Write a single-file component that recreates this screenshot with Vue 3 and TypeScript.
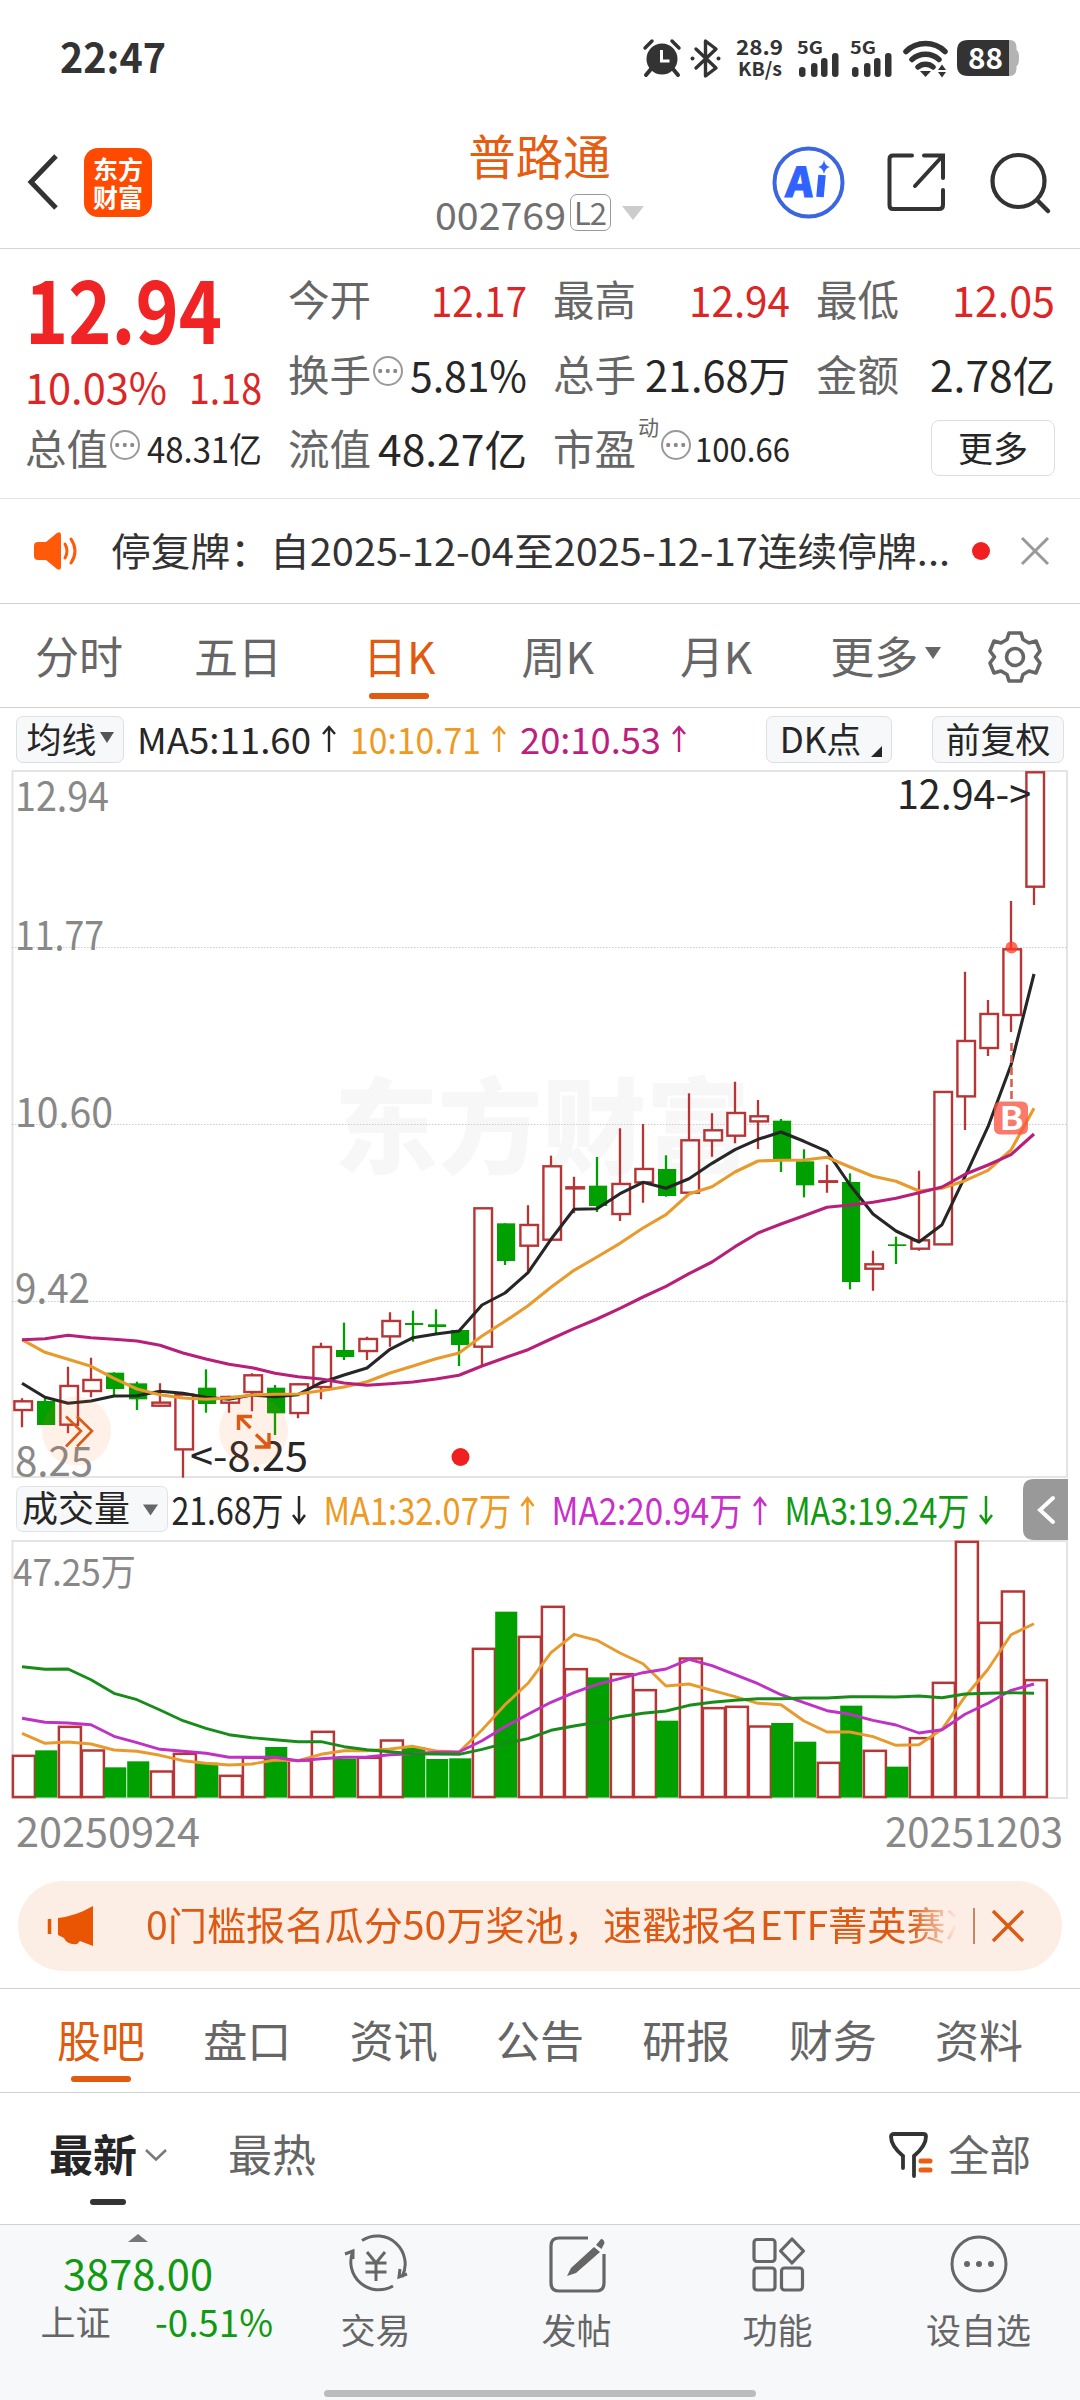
<script setup lang="ts">
import { h } from 'vue'

interface FitProps { t: string; w: number; s: number; c?: string; b?: number; squeeze?: boolean }

// One line of text set to an exact advance width.
const Fit = (p: FitProps) =>
  h('svg', { width: p.w, height: p.s, style: { overflow: 'visible', display: 'block', flex: 'none' } }, [
    h('text', {
      x: 0,
      y: (p.s * 0.936).toFixed(2),
      'font-size': p.s,
      fill: p.c ?? '#262626',
      'font-weight': p.b ?? 400,
      textLength: p.w,
      lengthAdjust: p.squeeze ? 'spacingAndGlyphs' : 'spacing',
    }, p.t),
  ])
Fit.props = { t: String, w: Number, s: Number, c: String, b: Number, squeeze: Boolean }

const RED = '#dc2626'
const UP = '#b83535'
const DOWN = '#00a000'

const STEP = 23
const cx = (i: number) => 22 + STEP * i

// kind, high, body top, body bottom, low
type Candle = ['r' | 'g', number, number, number, number]
const raw: Candle[] = [
  ['r', 835, 843, 871, 922], ['g', 835, 843, 915, 915], ['r', 740, 797, 915, 940], ['r', 713, 779, 814, 832],
  ['g', 757, 758, 807, 825], ['g', 785, 790, 838, 870], ['r', 790, 847, 858, 860], ['r', 823, 823, 989, 1073],
  ['g', 748, 803, 852, 878], ['r', 827, 830, 849, 878], ['r', 760, 765, 817, 874], ['g', 795, 803, 880, 945],
  ['r', 790, 792, 880, 895], ['r', 668, 680, 802, 838], ['g', 608, 690, 711, 720], ['r', 650, 656, 694, 720],
  ['r', 577, 602, 650, 680], ['g', 572, 609, 615, 665], ['g', 568, 613, 621, 640], ['g', 630, 630, 675, 738],
  ['r', 263, 264, 681, 738], ['g', 310, 310, 423, 435], ['r', 256, 314, 378, 455], ['r', 107, 138, 360, 360],
  ['r', 170, 201, 206, 280], ['g', 111, 197, 258, 276], ['r', 25, 191, 283, 303], ['r', 12, 146, 188, 248],
  ['g', 106, 147, 228, 230], ['r', -80, 60, 219, 219], ['r', -20, 30, 62, 110], ['r', -115, -22, 48, 70],
  ['r', -60, -12, 5, 87], ['g', -3, 2, 120, 156], ['g', 88, 124, 196, 232], ['r', 134, 183, 184, 218],
  ['g', 160, 186, 486, 508], ['r', 392, 432, 447, 512], ['g', 350, 373, 378, 432], ['r', 152, 360, 387, 392],
  ['r', -85, -85, 374, 374], ['r', -445, -238, -70, 30], ['r', -360, -319, -215, -192], ['r', -657, -513, -314, -264],
  ['r', -1044, -1044, -699, -645],
]
const toY = (d: number) => 1120 + d / 3
const candles = raw.map(([kind, hi, top, bot, lo], i) => ({
  x: cx(i), up: kind === 'r', hi: toY(hi), top: toY(top), bot: toY(bot), lo: toY(lo),
}))

const points = (base: number, v: number[]) => v.map((d, i) => `${cx(i)},${(base + d / 3).toFixed(1)}`).join(' ')

const ma5 = points(1120, [790, 832, 850, 843, 828, 827, 814, 820, 832, 838, 825, 830, 824, 788, 765, 744, 688, 653, 642, 633, 555, 519, 458, 358, 268, 266, 221, 187, 205, 176, 130, 89, 58, 36, 64, 94, 195, 282, 333, 366, 314, 170, 20, -165, -438])
const ma10 = points(1120, [659, 697, 718, 739, 775, 807, 824, 834, 838, 834, 825, 823, 822, 812, 801, 785, 759, 738, 716, 699, 648, 604, 557, 502, 451, 411, 370, 324, 284, 222, 200, 156, 123, 121, 120, 112, 141, 169, 184, 213, 205, 182, 151, 90, -35])
const ma20 = points(1120, [659, 656, 646, 653, 658, 663, 676, 699, 717, 733, 743, 760, 770, 777, 789, 796, 791, 786, 777, 766, 738, 713, 689, 657, 626, 597, 565, 531, 499, 461, 426, 380, 339, 312, 287, 262, 255, 247, 235, 218, 201, 163, 135, 104, 42])

const volTops = [856, 841, 769, 840, 892, 874, 903, 850, 878, 916, 862, 831, 870, 784, 866, 862, 810, 832, 867, 865, 535, 425, 499, 409, 596, 622, 611, 659, 752, 564, 713, 709, 768, 759, 815, 877, 707, 841, 890, 803, 637, 214, 457, 363, 629]
const volumes = volTops.map((d, i) => ({ x: 12 + STEP * i, y: 1470 + d / 3, up: raw[i][0] === 'r' }))
const vma1 = points(1470, [790, 820, 816, 822, 840, 844, 856, 872, 880, 885, 882, 870, 872, 853, 842, 842, 837, 829, 843, 846, 780, 704, 640, 548, 493, 511, 549, 581, 648, 642, 661, 680, 700, 704, 753, 786, 786, 800, 826, 824, 778, 680, 598, 494, 461])
const vma2 = points(1470, [745, 757, 759, 764, 799, 818, 838, 844, 850, 862, 862, 862, 872, 866, 862, 861, 854, 851, 847, 846, 812, 770, 733, 697, 668, 643, 626, 608, 597, 568, 587, 614, 641, 674, 698, 722, 733, 751, 765, 789, 779, 733, 700, 661, 642])
const vma3 = points(1470, [590, 598, 597, 629, 670, 689, 720, 752, 775, 794, 803, 809, 815, 815, 830, 839, 845, 851, 852, 853, 838, 820, 806, 781, 768, 757, 740, 730, 723, 706, 697, 691, 686, 686, 684, 684, 680, 680, 681, 678, 683, 672, 670, 668, 670])

const gridLines = [947.5, 1124.5, 1301.5]
const axis = [
  { t: '12.94', y: 811, w: 94 }, { t: '11.77', y: 950, w: 89 }, { t: '10.60', y: 1127, w: 98 },
  { t: '9.42', y: 1303, w: 75 }, { t: '8.25', y: 1476, w: 78 },
]
const sections = ['股吧', '盘口', '资讯', '公告', '研报', '财务', '资料']
const signalBars = [[2, 67], [14, 63], [24, 58], [35, 53]]
</script>

<template>
  <div class="screen">
    <header class="status">
      <Fit class="time" t="22:47" :w="106" :s="41" c="#333" :b="600" squeeze />
      <svg class="status-icons" width="380" height="44" viewBox="640 36 380 44">
        <g fill="#333">
          <circle cx="662" cy="59" r="15.5" />
          <path d="M651 69l-5 6M673 69l5 6" stroke="#333" stroke-width="4" stroke-linecap="round" />
          <path d="M645 48l7-7M679 48l-7-7" stroke="#333" stroke-width="3.5" stroke-linecap="round" />
          <path d="M661.500 50v11h8" fill="none" stroke="#fff" stroke-width="3" />
        </g>
        <path d="M696 49l20 19-10.500 8V41L716 49l-20 19" fill="none" stroke="#333" stroke-width="3.400" stroke-linejoin="round" stroke-linecap="round" />
        <circle cx="692.500" cy="58.500" r="2" fill="#333" /><circle cx="718.500" cy="58.500" r="2" fill="#333" />
        <text x="736" y="55" font-size="21" font-weight="600" fill="#333" textLength="47" lengthAdjust="spacingAndGlyphs">28.9</text>
        <text x="738" y="76" font-size="19" font-weight="600" fill="#333" textLength="44" lengthAdjust="spacingAndGlyphs">KB/s</text>
        <g v-for="o in [797, 850]" :key="o">
          <text :x="o" y="54" font-size="17" font-weight="700" fill="#333" textLength="26" lengthAdjust="spacingAndGlyphs">5G</text>
          <rect v-for="b in signalBars" :key="b[0]" :x="o + b[0]" :y="b[1]" width="6.500" :height="77 - b[1]" rx="3" fill="#333" />
        </g>
        <g fill="none" stroke="#333" stroke-width="5.500" stroke-linecap="round">
          <path d="M906 51.500a28 28 0 0 1 39 0" />
          <path d="M912 59.500a20 20 0 0 1 27 0" />
          <path d="M918 67a11.500 11.500 0 0 1 15 0" />
        </g>
        <path d="M920 71h11l-5.500 6z" fill="#333" />
        <path d="M938 70l4-5.500 4 5.500zM938 72l4 5.500 4-5.500z" fill="#333" />
        <path d="M1006 40h4q6 0 6.500 7v3q2.500 1 2.500 8t-2.500 8v3q-.5 7-6.500 7h-4z" fill="#b3b3b3" />
        <path d="M968 40h41v36h-41q-11 0-11-11V51q0-11 11-11z" fill="#333" />
        <text x="968" y="69" font-size="29" font-weight="700" fill="#fff" textLength="35" lengthAdjust="spacingAndGlyphs">88</text>
      </svg>
    </header>

    <nav class="topbar">
      <div class="side">
        <svg width="32" height="58" viewBox="0 0 32 58"><path d="M29 3L4 29l25 26" fill="none" stroke="#333" stroke-width="5" /></svg>
        <div class="logo"><span>东方</span><span>财富</span></div>
      </div>
      <div class="title">
        <b>普路通</b>
        <div class="code">
          <Fit t="002769" :w="131" :s="38" c="#707070" squeeze />
          <span class="l2"><Fit t="L2" :w="33" :s="31" c="#707070" /></span>
          <i class="tri" />
        </div>
      </div>
      <div class="tools">
        <svg width="73" height="73" viewBox="0 0 73 73">
          <circle cx="36.500" cy="36.500" r="34" fill="none" stroke="#3b66e0" stroke-width="4" />
          <text transform="translate(13 50.500) skewX(-5)" font-size="41" font-weight="900" fill="#2f62ff" stroke="#2f62ff" stroke-width="1" textLength="27" lengthAdjust="spacingAndGlyphs">A</text>
          <path d="M50 29l-2 22" stroke="#2f62ff" stroke-width="7.500" />
          <path d="M52 14q1 6 6 7-5 1-6 7-1-6-6-7 5-1 6-7z" fill="#2f62ff" />
        </svg>
        <svg width="60" height="60" viewBox="0 0 60 60">
          <path d="M25 3.500H6q-3.500 0-3.500 3.500v46q0 4 3.500 4h46q4 0 4-4V38M37 3.500h19V26M56 3.500L28 34" fill="none" stroke="#333" stroke-width="4" stroke-linecap="round" />
        </svg>
        <svg width="62" height="62" viewBox="0 0 62 62">
          <circle cx="28.500" cy="30" r="26" fill="none" stroke="#333" stroke-width="4.200" />
          <path d="M47 49l11 11" stroke="#333" stroke-width="4.500" stroke-linecap="round" />
        </svg>
      </div>
    </nav>

    <section class="quote">
      <div class="price">
        <Fit t="12.94" :w="197" :s="87" c="#f02424" :b="700" squeeze />
        <div class="delta"><Fit t="10.03%" :w="142" :s="42" :c="RED" squeeze /><Fit t="1.18" :w="73" :s="42" :c="RED" squeeze /></div>
      </div>
      <div class="cell"><span>今开</span><Fit t="12.17" :w="96" :s="42" :c="RED" squeeze /></div>
      <div class="cell"><span>最高</span><Fit t="12.94" :w="101" :s="42" :c="RED" squeeze /></div>
      <div class="cell"><span>最低</span><Fit t="12.05" :w="103" :s="42" :c="RED" squeeze /></div>
      <div class="cell"><span>换手</span><i class="dots" /><Fit t="5.81%" :w="117" :s="42" squeeze /></div>
      <div class="cell"><span>总手</span><Fit t="21.68万" :w="145" :s="42" squeeze /></div>
      <div class="cell"><span>金额</span><Fit t="2.78亿" :w="125" :s="42" squeeze /></div>
      <div class="cell"><span>总值</span><i class="dots" /><Fit t="48.31亿" :w="115" :s="35" squeeze /></div>
      <div class="cell"><span>流值</span><Fit t="48.27亿" :w="149" :s="42" squeeze /></div>
      <div class="cell"><span>市盈</span><sup>动</sup><i class="dots" /><Fit t="100.66" :w="95" :s="33" squeeze /></div>
      <div class="cell end"><div class="more">更多</div></div>
    </section>

    <section class="notice">
      <svg width="48" height="38" viewBox="0 0 48 38">
        <path d="M4 10h8L23 1q4-2 4 2v32q0 4-4 2L12 28H4q-4 0-4-4V14q0-4 4-4z" fill="#ff5a0a" />
        <path d="M31 12q4 7 0 14M37 7q8 12 0 24" fill="none" stroke="#ff5a0a" stroke-width="3" stroke-linecap="round" />
      </svg>
      <Fit t="停复牌：自2025-12-04至2025-12-17连续停牌..." :w="839" :s="38.5" c="#333" squeeze />
      <i class="dot" />
      <svg width="30" height="30" viewBox="0 0 30 30"><path d="M2 2l26 26M28 2L2 28" stroke="#999" stroke-width="3" /></svg>
    </section>

    <nav class="periods">
      <span>分时</span><span>五日</span><span class="on">日K</span><span>周K</span><span>月K</span>
      <span class="drop">更多<i /></span>
      <svg width="52" height="54" viewBox="-26 -27 52 54">
        <path d="M-6-24H6L8-17.500 14-14 21-16 25-6 20.500 0 25 6 21 16 14 14 8 17.500 6 24H-6L-8 17.500-14 14-21 16-25 6-20.500 0-25-6-21-16-14-14-8-17.500z" fill="none" stroke="#666" stroke-width="3.600" stroke-linejoin="round" />
        <circle r="8.500" fill="none" stroke="#666" stroke-width="3.600" />
      </svg>
    </nav>

    <section class="ma-row">
      <div class="chip first">均线<i /></div>
      <Fit class="m5" t="MA5:11.60" :w="174" :s="36" squeeze /><svg class="arrow" width="14" height="28" viewBox="0 0 14 28"><path d="M7 27V2M1 9l6-7 6 7" fill="none" stroke="#262626" stroke-width="2.400" /></svg>
      <Fit t="10:10.71" :w="131" :s="36" c="#ee9a22" squeeze /><svg class="arrow" width="14" height="28" viewBox="0 0 14 28"><path d="M7 27V2M1 9l6-7 6 7" fill="none" stroke="#ee9a22" stroke-width="2.400" /></svg>
      <Fit t="20:10.53" :w="141" :s="36" c="#be1e7d" squeeze /><svg class="arrow" width="14" height="28" viewBox="0 0 14 28"><path d="M7 27V2M1 9l6-7 6 7" fill="none" stroke="#be1e7d" stroke-width="2.400" /></svg>
      <div class="chip dk">DK点<i /></div>
      <div class="chip">前复权</div>
    </section>

    <svg class="chart" width="1080" height="1092" viewBox="0 770 1080 1092">
      <text x="334" y="1166" font-size="104" font-weight="900" fill="#f7f7f7" textLength="416">东方财富</text>
      <g fill="none" stroke="#e4e4e4" stroke-width="2">
        <rect x="12.500" y="771" width="1054.500" height="706" />
        <rect x="12.500" y="1541" width="1054.500" height="257" />
      </g>
      <line v-for="y in gridLines" :key="y" x1="12" x2="1067" :y1="y" :y2="y" stroke="#ccc" stroke-dasharray="1.500 1.500" />
      <text v-for="a in axis" :key="a.t" x="15" :y="a.y" font-size="41" fill="#888" :textLength="a.w" lengthAdjust="spacingAndGlyphs">{{ a.t }}</text>

      <g v-for="(c, i) in candles" :key="i">
        <template v-if="c.up">
          <path :d="`M${c.x} ${c.hi}V${c.top}M${c.x} ${c.bot}V${c.lo}`" :stroke="UP" stroke-width="2.300" />
          <rect :x="c.x - 7.600" :y="c.top + 0.300" width="17.600" :height="Math.max(0.5, c.bot - c.top - 0.6)" fill="#fff" :stroke="UP" stroke-width="2.400" />
        </template>
        <template v-else>
          <path :d="`M${c.x} ${c.hi}V${c.lo}`" :stroke="DOWN" stroke-width="2.300" />
          <rect :x="c.x - 8" :y="c.top" width="18.200" :height="c.bot - c.top" :fill="DOWN" />
        </template>
      </g>
      <g fill="none" stroke-width="3.100" stroke-linejoin="round">
        <polyline :points="ma5" stroke="#262626" />
        <polyline :points="ma10" stroke="#e99a2c" />
        <polyline :points="ma20" stroke="#b81f78" />
      </g>

      <text x="897" y="809" font-size="40" fill="#262626" textLength="134" lengthAdjust="spacingAndGlyphs">12.94-&gt;</text>
      <text x="190" y="1471" font-size="40" fill="#262626" textLength="118" lengthAdjust="spacingAndGlyphs">&lt;-8.25</text>
      <circle cx="1011.500" cy="947.500" r="6" fill="#ff3b26" opacity=".75" />
      <path d="M1011.500 1043V1102" stroke="#d9604f" stroke-width="2.600" stroke-dasharray="8 4" />
      <rect x="994" y="1101.500" width="34" height="33" rx="6" fill="#fa5542" opacity=".78" />
      <text x="999.500" y="1130" font-size="32" font-weight="700" fill="#fff" textLength="24" lengthAdjust="spacingAndGlyphs">B</text>
      <g fill="#ff6a1f" fill-opacity=".1"><circle cx="76.500" cy="1431" r="34.500" /><circle cx="253.500" cy="1431" r="34.500" /></g>
      <g fill="none" stroke="#dc5a14" stroke-width="2.600">
        <path d="M66 1416.500l15 14.500-15 15.500M77 1416.500l15 14.500-15 15.500" />
        <path d="M250.500 1428l-12-12M238.500 1430v-13.500H252M256 1434.500l13 12.500M255 1447h14v-14" stroke-width="3.400" />
      </g>
      <circle cx="460.500" cy="1457" r="9" fill="#f02020" />

      <rect x="16.500" y="1486.500" width="151" height="45" rx="6" fill="#f7f8fa" stroke="#e0e2e6" />
      <text x="22" y="1522" font-size="36" fill="#262626" textLength="108">成交量</text>
      <path d="M143 1504.500h15l-7.500 11z" fill="#666" />
      <g font-size="38">
        <text x="171.500" y="1525" fill="#262626" textLength="112" lengthAdjust="spacingAndGlyphs">21.68万</text>
        <text x="323.500" y="1525" fill="#ee9a22" textLength="188" lengthAdjust="spacingAndGlyphs">MA1:32.07万</text>
        <text x="551.500" y="1525" fill="#c92fc9" textLength="191" lengthAdjust="spacingAndGlyphs">MA2:20.94万</text>
        <text x="784.500" y="1525" fill="#119911" textLength="185" lengthAdjust="spacingAndGlyphs">MA3:19.24万</text>
      </g>
      <g fill="none" stroke-width="2.500">
        <path d="M299 1496v27M293 1515l6 8 6-8" stroke="#262626" />
        <path d="M527.500 1525v-27M521.500 1506l6-8 6 8" stroke="#ee9a22" />
        <path d="M760 1525v-27M754 1506l6-8 6 8" stroke="#c92fc9" />
        <path d="M986 1496v27M980 1515l6 8 6-8" stroke="#119911" />
      </g>
      <path d="M1068 1479h-34q-11 0-11 11v39q0 11 11 11h34z" fill="#999" />
      <path d="M1053 1498l-13 12 13 12" fill="none" stroke="#fff" stroke-width="4" stroke-linecap="round" />

      <text x="13" y="1586" font-size="37" fill="#888" textLength="123" lengthAdjust="spacingAndGlyphs">47.25万</text>
      <g v-for="(v, i) in volumes" :key="'v' + i">
        <rect v-if="v.up" :x="v.x + 0.900" :y="v.y + 0.500" width="22" :height="1796.500 - v.y" fill="#fff" :stroke="UP" stroke-width="2.500" />
        <rect v-else :x="v.x + 0.200" :y="v.y" width="22.100" :height="1797.500 - v.y" :fill="DOWN" />
      </g>
      <g fill="none" stroke-width="2.900" stroke-linejoin="round">
        <polyline :points="vma1" stroke="#e99a2c" />
        <polyline :points="vma2" stroke="#bf32c4" />
        <polyline :points="vma3" stroke="#188c18" />
      </g>
      <text x="16" y="1846.500" font-size="40" fill="#888" textLength="184" lengthAdjust="spacingAndGlyphs">20250924</text>
      <text x="885" y="1846.500" font-size="40" fill="#888" textLength="178" lengthAdjust="spacingAndGlyphs">20251203</text>
    </svg>

    <section class="banner">
      <svg width="46" height="40" viewBox="0 0 46 40"><path d="M1.500 13v15" stroke="#ea5504" stroke-width="3.500" /><path d="M10 12Q28 10 45 0v40l-13-5-3 3q-10 1-13-6l-6-3z" fill="#ea5504" /></svg>
      <div class="marquee">0门槛报名瓜分50万奖池，速戳报名ETF菁英赛冲</div>
      <i class="bar" />
      <svg width="34" height="34" viewBox="0 0 34 34"><path d="M2 2l30 30M32 2L2 32" stroke="#dc5a14" stroke-width="3.400" /></svg>
    </section>

    <nav class="sections">
      <span v-for="(s, i) in sections" :key="s" :class="{ on: i === 0 }">{{ s }}</span>
    </nav>

    <section class="sort">
      <span class="newest">最新</span>
      <svg width="22" height="12" viewBox="0 0 22 12"><path d="M1 1l10 9.500L21 1" fill="none" stroke="#777" stroke-width="2.500" /></svg>
      <span class="hot">最热</span>
      <svg class="funnel" width="44" height="46" viewBox="0 0 44 46">
        <path d="M14 36V24Q2 14 2 4.500 2 2 5 2h29q3 0 3 2.500Q37 14 25 24v20" fill="none" stroke="#333" stroke-width="3.800" stroke-linecap="round" />
        <path d="M32 29h9M32 38h9" stroke="#ea5f14" stroke-width="5" stroke-linecap="round" />
      </svg>
      <span class="all">全部</span>
    </section>

    <footer class="dock">
      <div class="index">
        <svg width="20" height="8" viewBox="0 0 20 8"><path d="M0 8L10 0l10 8z" fill="#777" /></svg>
        <Fit class="idx" t="3878.00" :w="150" :s="42" c="#119911" squeeze />
        <div class="sub"><span>上证</span><Fit t="-0.51%" :w="118" :s="38" c="#119911" squeeze /></div>
      </div>
      <div class="item">
        <svg width="68" height="60" viewBox="0 0 68 60" fill="none" stroke="#666" stroke-width="3">
          <path d="M20 6.500A28 28 0 0 1 60 43M51 52A28 28 0 0 1 11 17" />
          <path d="M3 20l8-3v8M65 40l-8 3 1-8" />
          <path d="M25 18l9 11 9-11M34 29v18M23.500 29h21M23.500 38h21" />
        </svg><span>交易</span>
      </div>
      <div class="item">
        <svg width="68" height="60" viewBox="0 0 68 60">
          <path d="M45 4H16q-8 0-8 8v37q0 8 8 8h37q8 0 8-8V20" fill="none" stroke="#666" stroke-width="3.200" />
          <path d="M51 13l6 5-24 21-9 3 4-8zM53 11l5-6q3 0 3.500 4l-3 6z" fill="#666" />
        </svg><span>发帖</span>
      </div>
      <div class="item">
        <svg width="68" height="60" viewBox="0 0 68 60" fill="none" stroke="#666" stroke-width="3.200">
          <rect x="10" y="5.500" width="21" height="22" rx="3" /><rect x="10" y="34" width="21" height="22" rx="3" /><rect x="37.500" y="34" width="21" height="22" rx="3" />
          <path d="M48 5l11.500 12L48 29 36.500 17z" stroke-linejoin="round" />
        </svg><span>功能</span>
      </div>
      <div class="item">
        <svg width="68" height="60" viewBox="0 0 68 60">
          <circle cx="34" cy="30" r="27" fill="none" stroke="#666" stroke-width="3" />
          <circle cx="22" cy="30" r="3" fill="#666" /><circle cx="34" cy="30" r="3" fill="#666" /><circle cx="46" cy="30" r="3" fill="#666" />
        </svg><span>设自选</span>
      </div>
      <i class="home" />
    </footer>
  </div>
</template>

<style>
body { background: #fff; }
</style>

<style scoped>
.screen {
  box-sizing: border-box;
  width: 1080px;
  height: 2400px;
  overflow: hidden;
  background: #fff;
  color: #666;
  font-family: "Noto Sans CJK SC", "Noto Sans", sans-serif;
  font-size: 44px;
  line-height: 1;
  white-space: nowrap;
}
.screen * { box-sizing: border-box; }
svg { display: block; flex: none; overflow: visible; }
span, i { flex: none; }

.status { display: flex; align-items: center; justify-content: space-between; height: 116px; padding: 0 60px; }
.time { margin-top: -6px; }

.topbar { display: flex; justify-content: space-between; height: 133px; padding: 0 28px 0 27px; border-bottom: 1px solid #d4d4d4; }
.side { display: flex; align-items: center; width: 400px; }
.logo {
  display: flex; flex-direction: column; align-items: center; justify-content: center; gap: 3px;
  width: 68px; height: 69px; margin-left: 25px; border-radius: 14px;
  background: #ff4a00; color: #fff; font-size: 25px; font-weight: 700;
}
.title { display: flex; flex-direction: column; align-items: center; width: 220px; }
.title b { margin-top: 15px; color: #e65c10; font-size: 47.500px; font-weight: 400; }
.code { display: flex; align-items: center; margin-top: 15px; }
.l2 { display: flex; align-items: center; justify-content: center; width: 41px; height: 37px; margin-left: 4px; padding-bottom: 3px; border: 1.500px solid #999; border-radius: 7px; }
.tri { margin-left: 11px; border: 11px solid transparent; border-top: 14px solid #ccc; border-bottom: 0; }
.tools { display: flex; align-items: center; justify-content: flex-end; width: 400px; gap: 43px; }
.tools svg:first-child { margin-right: -1px; }

.quote {
  display: grid; grid-template-columns: 237px 239px 237px 239px; grid-template-rows: 75px 75px 73px; column-gap: 26px;
  height: 250px; padding: 12px 23px 0 25px; border-bottom: 1px solid #e4e4e4;
}
.price { grid-row: span 2; }
.price > svg { margin-top: 2px; }
.delta { display: flex; justify-content: space-between; margin-top: 15px; }
.cell { display: flex; align-items: center; font-size: 41.500px; }
.cell > svg:last-child { margin-left: auto; }
.end { justify-content: flex-end; }
.dots { width: 30px; height: 30px; margin: -5px 0 0 2px; border: 2.500px solid #999; border-radius: 50%; background: radial-gradient(circle, #888 1.800px, transparent 2.300px) 1.500px 50% / 7.500px 7.500px repeat-x; background-clip: content-box; padding: 0 2px; }
sup { align-self: flex-start; margin: 5px 0 0 2px; font-size: 21px; line-height: 1; }
.more { width: 124px; height: 56px; padding-top: 8px; border: 1.500px solid #dedede; border-radius: 8px; color: #262626; font-size: 35px; text-align: center; }

.notice { display: flex; align-items: center; height: 105px; padding: 0 28px 0 34px; border-bottom: 1px solid #d0d0d0; }
.notice > svg:nth-child(2) { margin: -4px 0 0 29px; }
.dot { width: 18px; height: 18px; margin: 0 30px 0 22px; border-radius: 50%; background: #f02020; }

.periods { display: flex; align-items: center; height: 104px; padding: 2px 35px 0; border-bottom: 1px solid #d0d0d0; }
.periods span { position: relative; height: 48px; margin-right: 71px; }
.periods .on { margin: 0 86px 0 10px; color: #e05a10; }
.periods span:nth-child(4) { margin-right: 86px; }
.periods span:nth-child(5) { margin-right: 78px; }
.on::after { content: ""; position: absolute; left: calc(50% - 30px); bottom: -18px; width: 60px; height: 6px; border-radius: 3px; background: #e05a10; }
.periods .drop { display: flex; margin-right: 48px; }
.drop i { margin: 14px 0 0 7px; border: 8px solid transparent; border-top: 12px solid #666; border-bottom: 0; }

.ma-row { display: flex; align-items: center; height: 62px; padding: 0 16px; font-size: 35px; color: #262626; }
.chip { display: flex; align-items: center; justify-content: center; height: 47px; width: 132px; margin-left: 40px; padding-bottom: 4px; border: 1px solid #dcdfe3; border-radius: 7px; background: #f7f8fa; }
.chip.first { width: 108px; margin-left: 0; }
.chip.first i { margin: 0 0 0 3px; border: 7.500px solid transparent; border-top: 11px solid #555; border-bottom: 0; }
.chip.dk { width: 126px; margin-left: auto; }
.dk i { align-self: flex-end; margin: 0 -4px 1px 10px; border-left: 11px solid transparent; border-bottom: 11px solid #262626; }
.m5 { margin: -3px 0 0 13px; }
.ma-row > svg:not(.arrow) { margin-top: -3px; }
.arrow { margin: 0 14px 0 11px; }

.banner { display: flex; align-items: center; width: 1044px; height: 90px; margin: 19px auto 17px; padding: 0 37px 0 30px; border-radius: 45px; background: #fdeee5; }
.marquee {
  width: 813px; height: 50px; margin-left: 52px; padding-top: 3px; overflow: hidden;
  color: #dc5a14; font-size: 39.200px;
  mask-image: linear-gradient(to right, #000 765px, transparent 812px);
}
.bar { width: 2px; height: 36px; margin: 0 16px 0 14px; background: #c98662; }

.sections { display: flex; align-items: center; justify-content: space-between; height: 105px; padding: 0 57px; border-top: 1px solid #d0d0d0; border-bottom: 1px solid #d0d0d0; }
.sections span { position: relative; height: 47px; }
.sections .on { color: #e05a10; }

.sort { display: flex; align-items: center; height: 131px; padding: 0 49px 8px; }
.newest { position: relative; height: 48px; margin-right: 8px; color: #262626; font-weight: 700; }
.newest::after { content: ""; position: absolute; left: 41px; bottom: -26px; width: 36px; height: 6px; border-radius: 3px; background: #333; }
.hot { height: 48px; margin-left: 61px; }
.funnel { margin-left: auto; }
.all { height: 44px; margin-left: 15px; font-size: 41.500px; }

.dock { display: flex; flex-wrap: wrap; align-content: flex-start; height: 176px; border-top: 1px solid #d0d2d5; background: #f7f8fa; font-size: 35px; }
.index { display: flex; flex-direction: column; align-items: center; width: 275px; height: 151px; padding-top: 9px; }
.idx { margin-top: 9px; }
.sub { display: flex; align-items: center; justify-content: space-between; width: 232px; margin: 8px 0 0 38px; }
.item { display: flex; flex-direction: column; align-items: center; width: 201px; height: 151px; padding-top: 9px; gap: 17px; }
.home { width: 432px; height: 7px; margin: 14px auto 0; border-radius: 4px; background: #bbbcbe; }
</style>
